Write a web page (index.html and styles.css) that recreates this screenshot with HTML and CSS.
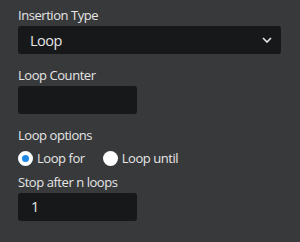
FILE: index.html
```html
<!DOCTYPE html>
<html lang="en">
<head>
    <meta charset="UTF-8">
    <meta name="viewport" content="width=device-width, initial-scale=1.0">
    <title>Insertion Settings</title>
    <link rel="stylesheet" href="styles.css">
</head>
<body>

<div class="panel">
    <div class="field">
        <label class="field-label">Insertion Type</label>
        <div class="select">
            <span class="select-value">Loop</span>
            <svg class="chevron" width="10" height="6" viewBox="0 0 10 6">
                <path d="M1 1 L5 5 L9 1" fill="none" stroke="#e8e8e8" stroke-width="1.6"/>
            </svg>
        </div>
    </div>

    <div class="field">
        <label class="field-label">Loop Counter</label>
        <div class="input input-small"></div>
    </div>

    <div class="field field-radios">
        <label class="field-label">Loop options</label>
        <div class="radio-row">
            <span class="radio">
                <span class="radio-dot checked"></span>
                Loop for
            </span>
            <span class="radio">
                <span class="radio-dot"></span>
                Loop until
            </span>
        </div>
    </div>

    <div class="field">
        <label class="field-label">Stop after n loops</label>
        <div class="input input-small">1</div>
    </div>
</div>

</body>
</html>
```

FILE: styles.css
```css
/* Dark settings panel */
body {
    margin: 0;
    background: #38393b;
    font-family: "Open Sans", "Noto Sans", sans-serif;
    color: #e6e6e6;
}
.panel {
    display: flex;
    flex-direction: column;
    gap: 12px;
    padding: 6px 19px 0 18px;
}
.field {
    display: flex;
    flex-direction: column;
    gap: 2px;
}
.field-label {
    font-size: 13px;
    line-height: 18px;
    letter-spacing: -0.45px;
}
.select {
    display: flex;
    align-items: center;
    justify-content: space-between;
    height: 28px;
    padding: 0 9px 0 12px;
    background: #17181a;
    border-radius: 3px;
    font-size: 14.5px;
    letter-spacing: -0.5px;
}
.chevron {
    display: block;
}
.input {
    height: 28px;
    line-height: 28px;
    padding: 0 13px;
    background: #17181a;
    border-radius: 3px;
    font-size: 14.5px;
    box-sizing: border-box;
}
.input-small {
    width: 119px;
}
.field-radios {
    margin-bottom: -7px;
}
.radio-row {
    display: flex;
    gap: 18px;
    height: 20px;
    align-items: center;
    margin-top: 2px;
}
.radio {
    display: flex;
    align-items: center;
    gap: 4px;
    font-size: 13px;
    letter-spacing: -0.45px;
}
.radio-dot {
    width: 15px;
    height: 15px;
    border-radius: 50%;
    background: #ffffff;
    box-sizing: border-box;
}
.radio-dot.checked {
    border: 4px solid #ffffff;
    background: #1e88e5;
}
```
